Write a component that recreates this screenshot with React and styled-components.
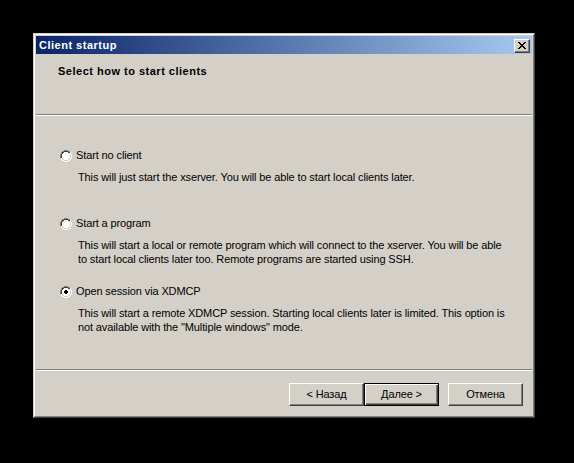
import React from "react";
import styled, { createGlobalStyle } from "styled-components";

const Global = createGlobalStyle`
  html, body { margin: 0; padding: 0; background: #000; }
  body { font-family: "Liberation Sans", Arial, sans-serif; font-size: 11px; color: #000; letter-spacing: -0.12px; }
  #root { padding: 33px 0 0 33px; }
`;

const Window = styled.div`
  width: 502px;
  height: 385px;
  box-sizing: border-box;
  background: #d4d0c8;
  border: 1px solid;
  border-color: #d4d0c8 #404040 #404040 #d4d0c8;
  display: flex;
  flex-direction: column;
`;

const Frame = styled.div`
  flex: 1;
  border: 1px solid;
  border-color: #ffffff #808080 #808080 #ffffff;
  padding: 1px;
  display: flex;
  flex-direction: column;
`;

const TitleBar = styled.div`
  height: 18px;
  flex: none;
  background: linear-gradient(to right, #0a246a, #a6caf0);
  display: flex;
  align-items: center;
  justify-content: space-between;
  padding: 0 2px 0 3px;
`;

const TitleText = styled.span`
  color: #fff;
  font-weight: bold;
  font-size: 11px;
  line-height: 18px;
  letter-spacing: 0.5px;
`;

const CloseButton = styled.div`
  width: 16px;
  height: 14px;
  margin-top: 1px;
  box-sizing: border-box;
  background: #d4d0c8;
  border: 1px solid;
  border-color: #ffffff #404040 #404040 #ffffff;
  box-shadow: inset -1px -1px 0 #808080;
  display: flex;
  align-items: center;
  justify-content: center;
`;

const Header = styled.div`
  height: 60px;
  flex: none;
  padding: 11px 0 0 22px;
  box-sizing: border-box;
  font-weight: bold;
  line-height: 13px;
  letter-spacing: 0.5px;
`;

const Separator = styled.div`
  height: 0;
  flex: none;
  border-top: 1px solid #808080;
  border-bottom: 1px solid #ffffff;
`;

const Body = styled.div`
  height: 253px;
  flex: none;
  box-sizing: border-box;
  padding: 33px 0 0 24px;
  display: grid;
  grid-template-rows: repeat(3, 68px);
  align-content: start;
`;

const Option = styled.div`
  display: flex;
  flex-direction: column;
`;

const OptionRow = styled.label`
  display: flex;
  align-items: center;
  gap: 4px;
  height: 13px;
  line-height: 13px;
`;

const Description = styled.div`
  margin: 8px 0 0 18px;
  line-height: 14px;
  width: 429px;
`;

const Footer = styled.div`
  flex: 1;
  display: flex;
  justify-content: flex-end;
  align-items: flex-start;
  padding: 12px 9px 0 0;
`;

const ButtonPair = styled.div`
  display: flex;
  margin-right: 9px;
`;

const Button = styled.div`
  width: 75px;
  height: 23px;
  box-sizing: border-box;
  background: #d4d0c8;
  border: 1px solid;
  border-color: ${(p) => (p.$default ? "#000 #000 #000 #000" : "#ffffff #404040 #404040 #ffffff")};
  box-shadow: ${(p) =>
    p.$default
      ? "inset 1px 1px 0 #ffffff, inset -1px -1px 0 #404040, inset -2px -2px 0 #808080"
      : "inset -1px -1px 0 #808080"};
  display: flex;
  align-items: center;
  justify-content: center;
  font-size: 11px;
  line-height: 13px;
`;

const Radio = ({ checked }) => (
  <svg width="12" height="12" viewBox="0 0 12 12" shapeRendering="crispEdges">
    <path d="M4 0h4v1H4zM2 1h2v1H2zM8 1h2v1H8zM1 2h1v2H1zM0 4h1v4H0z" fill="#808080" />
    <path d="M4 1h4v1H4zM2 2h2v1H2zM8 2h2v1H8zM2 3h1v1H2zM1 4h1v4H1z" fill="#404040" />
    <path d="M10 2h1v2h-1zM11 4h1v4h-1zM10 8h1v2h-1zM8 10h2v1H8zM2 10h2v1H2zM4 11h4v1H4zM1 8h1v2H1z" fill="#ffffff" />
    <path d="M9 3h1v1H9zM10 4h1v4h-1zM9 8h1v1H9zM8 9h1v1H8zM3 9h1v1H3zM4 10h4v1H4zM2 8h1v1H2z" fill="#d4d0c8" />
    <path d="M4 2h4v1H4zM3 3h6v1H3zM2 4h8v4H2zM3 8h6v1H3zM4 9h4v1H4z" fill="#ffffff" />
    {checked && <path d="M5 4h2v1H5zM4 5h4v2H4zM5 7h2v1H5z" fill="#000" />}
  </svg>
);

const CloseIcon = () => (
  <svg width="8" height="7" viewBox="0 0 8 7" shapeRendering="crispEdges">
    <path
      d="M0 0h2v1H0zM6 0h2v1H6zM1 1h2v1H1zM5 1h2v1H5zM2 2h4v1H2zM3 3h2v1H3zM2 4h4v1H2zM1 5h2v1H1zM5 5h2v1H5zM0 6h2v1H0zM6 6h2v1H6z"
      fill="#000"
    />
  </svg>
);

const options = [
  {
    label: "Start no client",
    desc: "This will just start the xserver. You will be able to start local clients later.",
  },
  {
    label: "Start a program",
    desc: "This will start a local or remote program which will connect to the xserver. You will be able to start local clients later too. Remote programs are started using SSH.",
  },
  {
    label: "Open session via XDMCP",
    desc: 'This will start a remote XDMCP session. Starting local clients later is limited. This option is not available with the "Multiple windows" mode.',
    checked: true,
  },
];

export default function App() {
  return (
    <>
      <Global />
      <Window>
        <Frame>
          <TitleBar>
            <TitleText>Client startup</TitleText>
            <CloseButton>
              <CloseIcon />
            </CloseButton>
          </TitleBar>
          <Header>Select how to start clients</Header>
          <Separator />
          <Body>
            {options.map((o) => (
              <Option key={o.label}>
                <OptionRow>
                  <Radio checked={o.checked} />
                  <span>{o.label}</span>
                </OptionRow>
                <Description>{o.desc}</Description>
              </Option>
            ))}
          </Body>
          <Separator />
          <Footer>
            <ButtonPair>
              <Button>&lt; Назад</Button>
              <Button $default>Далее &gt;</Button>
            </ButtonPair>
            <Button>Отмена</Button>
          </Footer>
        </Frame>
      </Window>
    </>
  );
}
